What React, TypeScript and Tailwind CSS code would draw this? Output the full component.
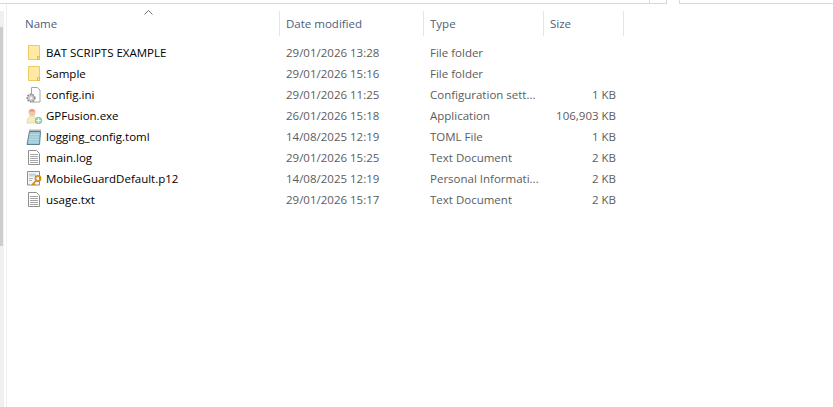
const files = [
  { name: "BAT SCRIPTS EXAMPLE", date: "29/01/2026 13:28", type: "File folder", size: "", icon: "folder" },
  { name: "Sample", date: "29/01/2026 15:16", type: "File folder", size: "", icon: "folder" },
  { name: "config.ini", date: "29/01/2026 11:25", type: "Configuration sett...", size: "1 KB", icon: "ini" },
  { name: "GPFusion.exe", date: "26/01/2026 15:18", type: "Application", size: "106,903 KB", icon: "exe" },
  { name: "logging_config.toml", date: "14/08/2025 12:19", type: "TOML File", size: "1 KB", icon: "toml" },
  { name: "main.log", date: "29/01/2026 15:25", type: "Text Document", size: "2 KB", icon: "text" },
  { name: "MobileGuardDefault.p12", date: "14/08/2025 12:19", type: "Personal Informati...", size: "2 KB", icon: "cert" },
  { name: "usage.txt", date: "29/01/2026 15:17", type: "Text Document", size: "2 KB", icon: "text" },
];

function FileIcon({ icon }: { icon: string }) {
  if (icon === "folder") {
    return (
      <svg width="16" height="16" viewBox="0 0 16 16">
        <path d="M2.5 0.5h11v14h-11z" fill="#ffe9a3" stroke="#eecb60" />
        <path d="M11.5 14.5v-3h2v3z" fill="#ffe9a3" stroke="#e5b93f" />
      </svg>
    );
  }
  if (icon === "text") {
    return (
      <svg width="16" height="16" viewBox="0 0 16 16">
        <path d="M2.5 0.5h8l3 3v11h-11z" fill="#fff" stroke="#8f8f8f" />
        <path d="M4 4.500h8M4 6.500h8M4 8.500h8M4 10.500h8M4 12.500h8" stroke="#a6a6a6" />
      </svg>
    );
  }
  if (icon === "ini") {
    return (
      <svg width="16" height="16" viewBox="0 0 16 16">
        <path d="M5.500 0.500h6l2.500 2.500v12h-8.500z" fill="#fff" stroke="#a3a3a3" />
        <circle cx="5" cy="11" r="3.800" fill="#c4c4c4" stroke="#8a8a8a" strokeWidth="1.600" strokeDasharray="1.500 1.200" />
        <circle cx="5" cy="11" r="1.500" fill="#f4f4f4" />
      </svg>
    );
  }
  if (icon === "exe") {
    return (
      <svg width="18" height="16" viewBox="0 0 18 16">
        <circle cx="6" cy="4.500" r="3.500" fill="#f3c6a8" />
        <path d="M2.800 3.500c1-3.500 5.400-3.500 6.400 0z" fill="#e0977a" />
        <path d="M1 15c0-4 2-7 5-7s5 3 5 7z" fill="#f5edc0" stroke="#d5c987" strokeWidth="0.600" />
        <circle cx="12.500" cy="12.500" r="3.300" fill="#a5d3b3" stroke="#7fb592" strokeWidth="0.700" />
        <path d="M12.500 10.500v4M10.500 12.500h4" stroke="#fff" />
      </svg>
    );
  }
  if (icon === "toml") {
    return (
      <svg width="16" height="16" viewBox="0 0 16 16">
        <path d="M3.500 2.500h11l-1 13h-12.500z" fill="#9cc8d8" stroke="#5f7f8e" />
        <path d="M3.500 5.500h10M3 8h10M2.800 10.500h10M2.500 13h10" stroke="#bcdce6" />
        <path d="M4 2.500v-2M6 2.500v-2M8 2.500v-2M10 2.500v-2M12 2.500v-2M14 2.500v-2" stroke="#6d6d6d" />
      </svg>
    );
  }
  return (
    <svg width="16" height="16" viewBox="0 0 16 16">
      <path d="M1.500 0.500h12v13.500h-12z" fill="#f5f5f5" stroke="#8f8f8f" />
      <path d="M3 2.500h7v3h-7z" fill="#c3d2ea" />
      <path d="M3 7.500h4M3 9.500h3" stroke="#b4b4b4" />
      <circle cx="12" cy="7.500" r="2.600" fill="none" stroke="#d18c18" strokeWidth="1.600" />
      <path d="M10.300 9.500l-4.300 4.500M7.500 12.500l1.500 1.500" stroke="#d18c18" strokeWidth="1.600" />
    </svg>
  );
}

function HeaderCell({ width, label, pad }: { width: string; label: string; pad: string }) {
  return (
    <div className={`${width} ${pad} h-[25px] shrink-0 flex items-center border-r border-[#e5e5e5] text-[#4c607a]`}>
      {label}
    </div>
  );
}

export default function App() {
  return (
    <div className="h-[407px] w-[833px] overflow-hidden bg-white text-[11.5px] leading-[21px] font-['Open_Sans','Noto_Sans',sans-serif]">
      {/* top edge of the toolbar: path box, its button and the search box */}
      <div className="flex h-[4px]">
        <div className="w-[667px] h-[4px] border-b border-r border-[#d9d9d9] relative">
          <div className="absolute right-[16px] top-0 h-[3px] w-px bg-[#d9d9d9]" />
        </div>
        <div className="w-[12px]" />
        <div className="flex-1 h-[4px] border-b border-l border-[#d9d9d9]" />
      </div>
      <div className="flex">
        {/* nav pane scrollbar */}
        <div className="w-[4px] shrink-0 mt-[7px] h-[396px] bg-[#f0f0f0]">
          <div className="h-[16px]" />
          <div className="h-[219px] w-[3px] bg-[#cdcdcd]" />
        </div>
        <div className="ml-[2px] w-px h-[403px] bg-[#f0f0f0] shrink-0" />
        <div className="flex-1 pl-[1px]">
          <div className="relative flex pt-[7px] h-[38px]">
            <div className="absolute left-[136px] top-[6px] w-[9px] h-[5px]">
              <svg width="9" height="5" viewBox="0 0 9 5" className="block">
                <path d="M0.500 4.500l4-4 4 4" fill="none" stroke="#707070" />
              </svg>
            </div>
            <HeaderCell width="w-[272px]" label="Name" pad="pl-[17px]" />
            <HeaderCell width="w-[144px]" label="Date modified" pad="pl-[6px]" />
            <HeaderCell width="w-[120px]" label="Type" pad="pl-[6px]" />
            <HeaderCell width="w-[80px]" label="Size" pad="pl-[6px]" />
          </div>
          <div>
            {files.map((file) => (
              <div key={file.name} className="flex h-[21px] items-center">
                <div className="w-[272px] shrink-0 flex items-center pl-[18px] text-black">
                  <span className="w-[20px] h-[16px] shrink-0"><FileIcon icon={file.icon} /></span>
                  <span>{file.name}</span>
                </div>
                <div className="w-[144px] shrink-0 pl-[6px] text-[#5c5c5c]">{file.date}</div>
                <div className="w-[120px] shrink-0 pl-[6px] text-[#5c5c5c] whitespace-nowrap">{file.type}</div>
                <div className="w-[72px] shrink-0 text-right text-[#5c5c5c]">{file.size}</div>
              </div>
            ))}
          </div>
        </div>
      </div>
    </div>
  );
}
